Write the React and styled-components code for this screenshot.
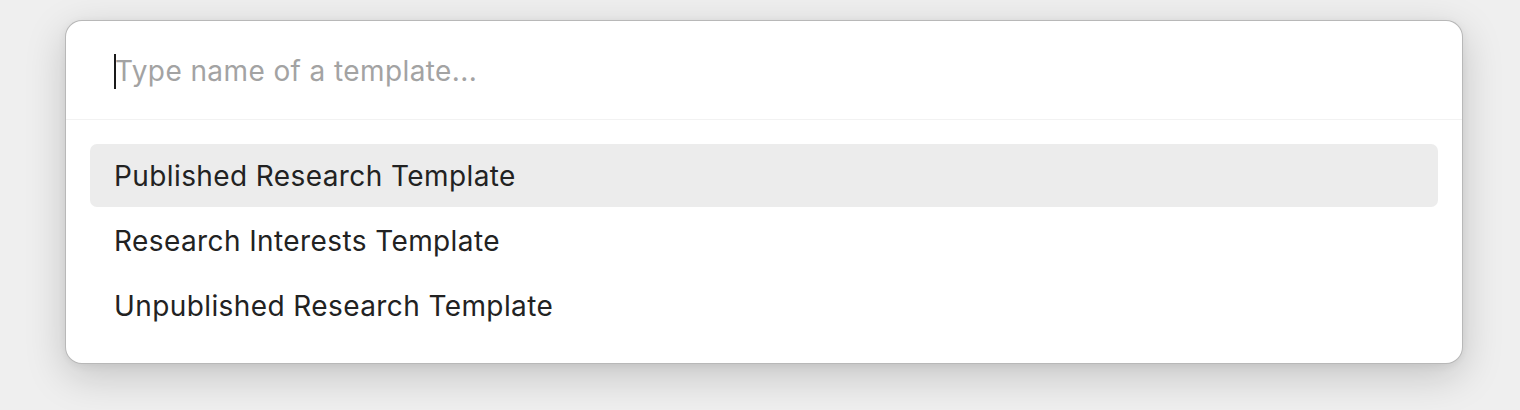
import React from "react";
import styled, { createGlobalStyle } from "styled-components";

const GlobalStyle = createGlobalStyle`
  html, body {
    margin: 0;
    padding: 0;
    background: #efefef;
    font-family: Inter, "Noto Sans", sans-serif;
  }
`;

const Page = styled.div`
  width: 1520px;
  height: 410px;
  padding: 20px 0 0 65px;
  box-sizing: border-box;
  background: #efefef;
`;

const Palette = styled.div`
  width: 1398px;
  box-sizing: border-box;
  background: #fff;
  border: 1px solid rgba(0, 0, 0, 0.28);
  border-radius: 17px;
  box-shadow: 0 12px 40px rgba(0, 0, 0, 0.18), 0 2px 8px rgba(0, 0, 0, 0.06);
  overflow: hidden;
`;

const SearchBar = styled.div`
  display: flex;
  align-items: center;
  height: 99px;
  padding: 2px 48px 0;
  box-sizing: border-box;
  border-bottom: 1px solid #f2f2f2;
`;

const SearchInput = styled.input`
  flex: 1;
  border: none;
  outline: none;
  background: transparent;
  font-family: inherit;
  font-size: 28px;
  letter-spacing: 0.4px;
  color: #222;
  caret-color: #222;
  padding: 0;
  &::placeholder {
    color: #a3a3a3;
  }
`;

const Caret = styled.span`
  width: 2px;
  height: 35px;
  background: #1a1a1a;
  margin-right: -1px;
`;

const List = styled.ul`
  list-style: none;
  margin: 0;
  padding: 24px 24px 26px;
  display: flex;
  flex-direction: column;
  gap: 2px;
`;

const Item = styled.li`
  display: flex;
  align-items: center;
  height: 63px;
  padding: 1px 24px 0;
  box-sizing: border-box;
  border-radius: 7px;
  font-size: 28px;
  letter-spacing: 0.4px;
  color: #222;
  background: ${(p) => (p.$active ? "#ececec" : "transparent")};
`;

const templates = [
  "Published Research Template",
  "Research Interests Template",
  "Unpublished Research Template",
];

export default function App() {
  return (
    <>
      <GlobalStyle />
      <Page>
        <Palette>
          <SearchBar>
            <Caret />
            <SearchInput placeholder="Type name of a template..." />
          </SearchBar>
          <List>
            {templates.map((t, i) => (
              <Item key={t} $active={i === 0}>
                {t}
              </Item>
            ))}
          </List>
        </Palette>
      </Page>
    </>
  );
}
